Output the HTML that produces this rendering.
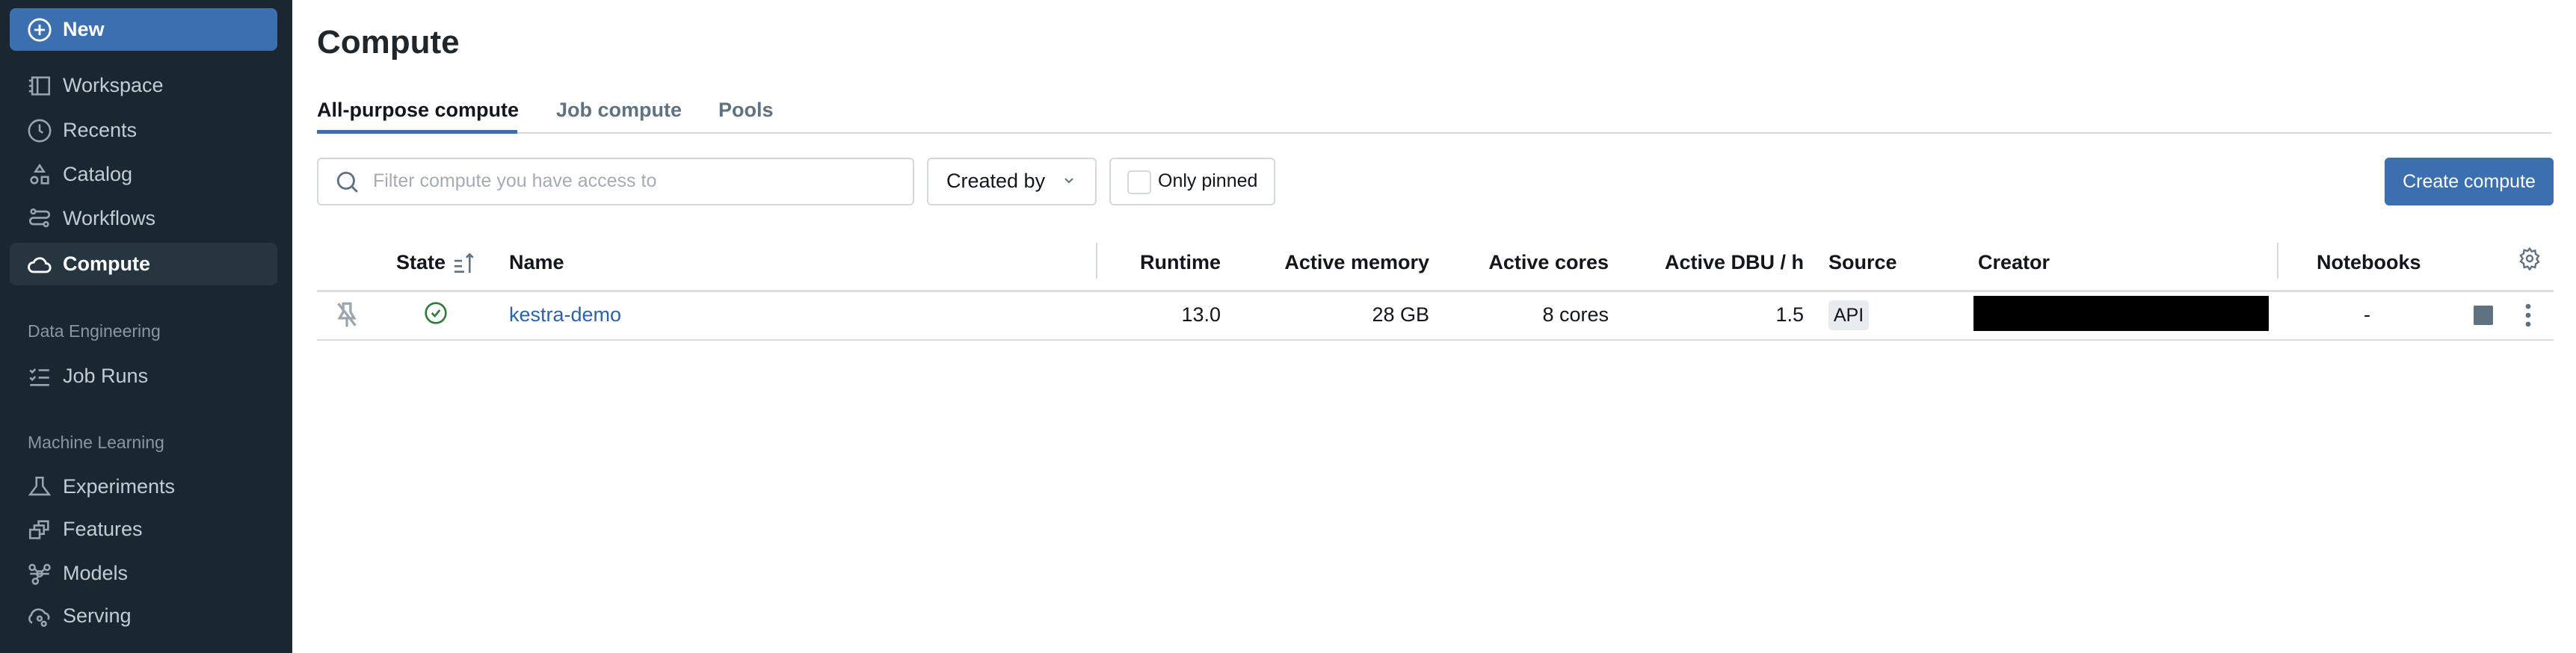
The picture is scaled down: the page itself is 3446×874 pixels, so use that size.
<!DOCTYPE html>
<html><head><meta charset="utf-8"><style>
*{box-sizing:border-box;margin:0;padding:0}
body{width:3446px;height:874px;overflow:hidden;background:#fff;font-family:"Liberation Sans",sans-serif;position:relative;color:#11171c}
.sb{position:absolute;left:0;top:0;width:391px;height:874px;background:#1b2730}
.it{position:absolute;left:13px;width:358px;height:57px;border-radius:8px;color:#c4ccd3;font-size:27px;display:flex;align-items:center}
.it svg{position:absolute;left:23px;width:34px;height:34px}
.it span{position:absolute;left:71px}
.hd{position:absolute;left:37px;color:#8a97a2;font-size:23px}
.a{position:absolute;white-space:nowrap}
.th{font-weight:bold;font-size:27px;top:336px}
.td{font-size:27px;top:406px}
</style></head><body>
<div class="sb">
<div class="it" style="top:11px;background:#3b6fb0;color:#fff;font-weight:bold"><svg viewBox="0 0 24 24" fill="none" stroke="#fff" stroke-width="2"><circle cx="12" cy="12" r="10"/><path d="M12 7v10M7 12h10"/></svg><span>New</span></div>
<div class="it" style="top:86px"><svg viewBox="0 0 24 24" fill="none" stroke="#9aa5ae" stroke-width="1.8"><rect x="5" y="4" width="16" height="16"/><path d="M10 4v16M2 7h3M2 12h3M2 17h3"/></svg><span>Workspace</span></div>
<div class="it" style="top:146px"><svg viewBox="0 0 24 24" fill="none" stroke="#9aa5ae" stroke-width="1.8"><circle cx="12" cy="12" r="10"/><path d="M12 6v6l3 2"/></svg><span>Recents</span></div>
<div class="it" style="top:205px"><svg viewBox="0 0 24 24" fill="none" stroke="#9aa5ae" stroke-width="1.8"><path d="M12 3l4 6H8z"/><circle cx="7" cy="17" r="3"/><rect x="14" y="14" width="6" height="6"/></svg><span>Catalog</span></div>
<div class="it" style="top:264px"><svg viewBox="0 0 24 24" fill="none" stroke="#9aa5ae" stroke-width="1.8"><circle cx="6" cy="5" r="2"/><path d="M8 5h10a3 3 0 010 6H6a3 3 0 000 6h10"/><circle cx="18" cy="17" r="2"/></svg><span>Workflows</span></div>
<div class="it" style="top:325px;background:#263540;color:#fff;font-weight:bold"><svg viewBox="0 0 24 24" fill="none" stroke="#fff" stroke-width="2"><path d="M6 19h12a4 4 0 000-8 6 6 0 00-11.5-1A4.5 4.5 0 006 19z"/></svg><span>Compute</span></div>
<div class="hd" style="top:430px">Data Engineering</div>
<div class="it" style="top:475px"><svg viewBox="0 0 24 24" fill="none" stroke="#9aa5ae" stroke-width="1.8"><path d="M3 6l2 2 3-3M3 13l2 2 3-3M11 6h10M11 13h10M3 20h18"/></svg><span>Job Runs</span></div>
<div class="hd" style="top:579px">Machine Learning</div>
<div class="it" style="top:623px"><svg viewBox="0 0 24 24" fill="none" stroke="#9aa5ae" stroke-width="1.8"><path d="M8 3h8M9 3v8l-6 8h18l-6-8V3"/></svg><span>Experiments</span></div>
<div class="it" style="top:680px"><svg viewBox="0 0 24 24" fill="none" stroke="#9aa5ae" stroke-width="1.8"><rect x="3" y="12" width="9" height="8"/><path d="M7 12V8h9v8h-4M11 8V4h9v8h-4"/></svg><span>Features</span></div>
<div class="it" style="top:739px"><svg viewBox="0 0 24 24" fill="none" stroke="#9aa5ae" stroke-width="1.8"><circle cx="5" cy="6" r="2.5"/><circle cx="19" cy="6" r="2.5"/><circle cx="12" cy="12" r="2.5"/><circle cx="8" cy="19" r="2.5"/><path d="M7 7l3 3M17 7l-3 3M11 14l-2 3M3 12h18"/></svg><span>Models</span></div>
<div class="it" style="top:796px"><svg viewBox="0 0 24 24" fill="none" stroke="#9aa5ae" stroke-width="1.8"><path d="M5 18a4 4 0 01-1-7 7 7 0 0113-2 4 4 0 013 6"/><circle cx="12" cy="14" r="2"/><circle cx="16" cy="19" r="2"/></svg><span>Serving</span></div>
</div>

<div class="a" style="left:424px;top:32px;font-size:44px;font-weight:bold;color:#1f272d">Compute</div>
<div class="a" style="left:424px;top:132px;font-size:27px;font-weight:bold">All-purpose compute</div>
<div class="a" style="left:744px;top:132px;font-size:27px;font-weight:bold;color:#5f7281">Job compute</div>
<div class="a" style="left:961px;top:132px;font-size:27px;font-weight:bold;color:#5f7281">Pools</div>
<div class="a" style="left:424px;top:177px;width:2989px;height:2px;background:#d1d9e1"></div>
<div class="a" style="left:424px;top:174px;width:268px;height:5px;background:#3b6fb0"></div>

<div class="a" style="left:424px;top:211px;width:799px;height:64px;border:2px solid #d1d9e1;border-radius:6px"></div>
<svg class="a" style="left:448px;top:227px" width="34" height="34" viewBox="0 0 24 24" fill="none" stroke="#5f7281" stroke-width="2"><circle cx="10.5" cy="10.5" r="7.5"/><path d="M16 16l5 5"/></svg>
<div class="a" style="left:499px;top:228px;font-size:25px;color:#a3acb4">Filter compute you have access to</div>
<div class="a" style="left:1240px;top:211px;width:227px;height:64px;border:2px solid #d1d9e1;border-radius:6px"></div>
<div class="a" style="left:1266px;top:227px;font-size:27px">Created by</div>
<svg class="a" style="left:1422px;top:236px" width="16" height="12" viewBox="0 0 16 12" fill="none" stroke="#5f7281" stroke-width="2"><path d="M3 3l5 5 5-5"/></svg>
<div class="a" style="left:1484px;top:211px;width:222px;height:64px;border:2px solid #d1d9e1;border-radius:6px"></div>
<div class="a" style="left:1508px;top:228px;width:32px;height:32px;border:2px solid #d1d9e1;border-radius:5px"></div>
<div class="a" style="left:1549px;top:228px;font-size:25px">Only pinned</div>
<div class="a" style="left:3190px;top:211px;width:226px;height:64px;background:#3b6fb0;border-radius:6px;color:#fff;font-size:25px;text-align:center;line-height:64px">Create compute</div>

<div class="a th" style="left:530px">State</div>
<svg class="a" style="left:606px;top:336px" width="30" height="32" viewBox="0 0 20 22" fill="none" stroke="#5f7281" stroke-width="1.8"><path d="M1 9h7M1 14h7M1 19h9M15 20V3M12 6l3-3 3 3"/></svg>
<div class="a th" style="left:681px">Name</div>
<div class="a" style="left:1466px;top:325px;width:2px;height:48px;background:#d1d9e1"></div>
<div class="a th" style="right:1813px">Runtime</div>
<div class="a th" style="right:1534px">Active memory</div>
<div class="a th" style="right:1294px">Active cores</div>
<div class="a th" style="right:1033px">Active DBU / h</div>
<div class="a th" style="left:2446px">Source</div>
<div class="a th" style="left:2646px">Creator</div>
<div class="a" style="left:3046px;top:325px;width:2px;height:48px;background:#d1d9e1"></div>
<div class="a th" style="left:3099px">Notebooks</div>
<svg class="a" style="left:3368px;top:330px" width="32" height="32" viewBox="0 0 24 24" fill="none" stroke="#5f7281" stroke-width="1.8"><circle cx="12" cy="12" r="3"/><path d="M12 2l2 3 3.5-1 .5 3.5 3 2-2 3 2 3-3 2-.5 3.5-3.5-1-2 3-2-3-3.5 1L6 17 3 15l2-3-2-3 3-2 .5-3.5 3.5 1z"/></svg>
<div class="a" style="left:424px;top:388px;width:2992px;height:3px;background:#d7dde3"></div>

<svg class="a" style="left:450px;top:403px" width="28" height="36" viewBox="0 0 16 22" fill="none" stroke="#9aa5ae" stroke-width="2"><path d="M4 2h8M5 2v7l-3 5h12l-3-5V2M8 14v7M1 2l14 18"/></svg>
<svg class="a" style="left:567px;top:403px" width="32" height="32" viewBox="0 0 24 24" fill="none" stroke="#2e7d3a" stroke-width="2"><circle cx="12" cy="12" r="10"/><path d="M8 12l3 3 5-6"/></svg>
<div class="a td" style="left:681px;color:#2d62a8">kestra-demo</div>
<div class="a td" style="right:1813px">13.0</div>
<div class="a td" style="right:1534px">28 GB</div>
<div class="a td" style="right:1294px">8 cores</div>
<div class="a td" style="right:1033px">1.5</div>
<div class="a" style="left:2446px;top:402px;width:54px;height:40px;background:#e8ecf0;border-radius:5px;font-size:25px;line-height:40px;text-align:center">API</div>
<div class="a" style="left:2640px;top:396px;width:395px;height:47px;background:#000"></div>
<div class="a td" style="left:3162px">-</div>
<div class="a" style="left:3309px;top:409px;width:26px;height:26px;background:#5f7281;border-radius:2px"></div>
<svg class="a" style="left:3372px;top:405px" width="20" height="34" viewBox="0 0 10 20" fill="#5f7281"><circle cx="5" cy="3" r="2"/><circle cx="5" cy="10" r="2"/><circle cx="5" cy="17" r="2"/></svg>
<div class="a" style="left:424px;top:454px;width:2992px;height:2px;background:#d7dde3"></div>
</body></html>
